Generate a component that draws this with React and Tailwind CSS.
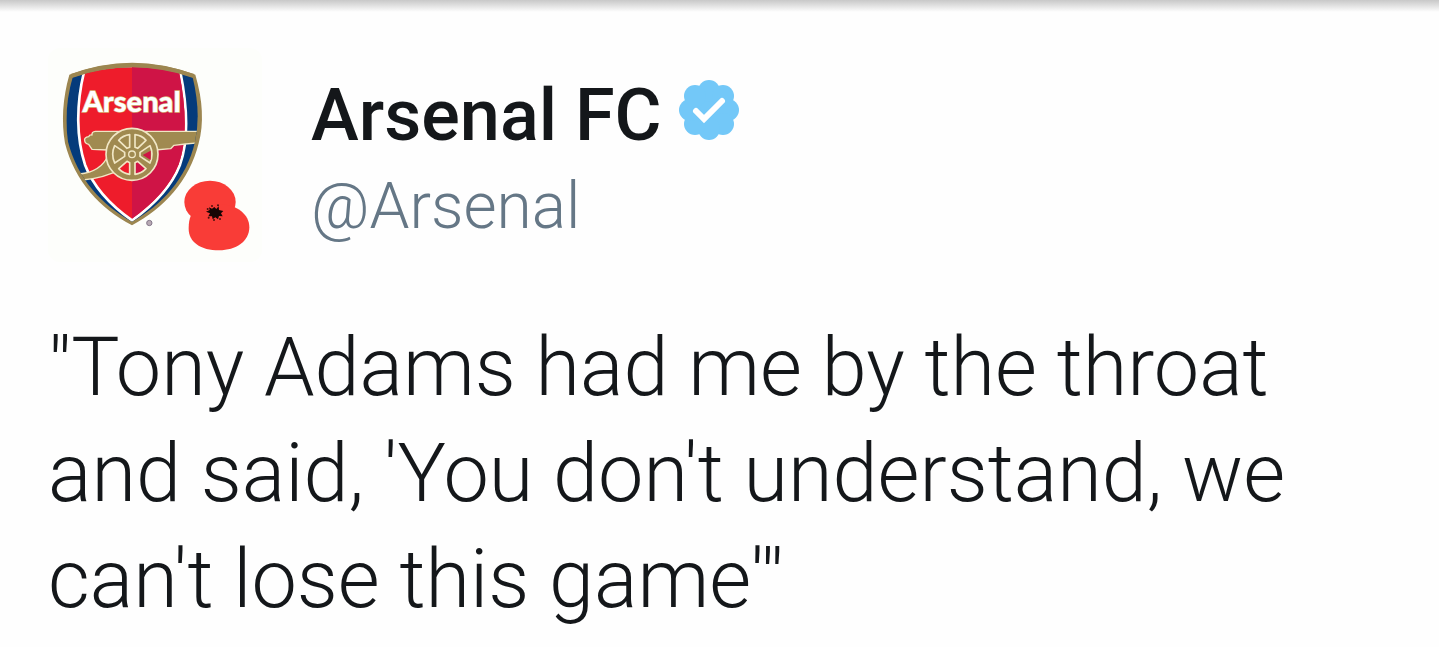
function Cannon() {
  return (
    <g stroke="#f0e6c4" strokeWidth="4" strokeLinejoin="round">
      <path
        d="M205 345 C190 380 160 398 118 402 L128 420 C175 416 220 400 250 385 Z"
        fill="#a08a50"
      />
      <path
        d="M480 274 L166 274 Q155 275 156 285 Q148 284 146 290 Q132 292 134 301 Q134 311 146 313 L156 328 L205 330 L345 330 L392 326 L402 316 L436 312 L480 308 Z"
        fill="#a08a50"
      />
    </g>
  );
}

function Wheel() {
  return (
    <g stroke="#f0e6c4" strokeWidth="5">
      <circle cx="276" cy="343" r="78" fill="#a08a50" />
      <g strokeWidth="5" strokeLinejoin="round">
        <path d="M269 284 L269 322 L261 325 L236 301 Q249 286 269 284 Z" fill="#a08a50" />
        <path d="M285 284 L285 322 L293 325 L318 301 Q305 286 285 284 Z" fill="#a08a50" />
        <path d="M269 403 L269 368 L261 364 L236 386 Q250 401 269 403 Z" fill="#ee1c2b" />
        <path d="M285 403 L285 368 L293 364 L318 386 Q304 401 285 403 Z" fill="#cf1446" />
        <path d="M224 317 L254 337 L254 349 L224 369 Q212 343 224 317 Z" fill="#a08a50" />
        <path d="M330 317 L300 337 L300 349 L330 369 Q342 343 330 317 Z" fill="#a08a50" />
        <path d="M332 332 L308 345 L332 360 Z" fill="#cf1446" stroke="none" />
      </g>
      <circle cx="276" cy="343" r="10" fill="#a08a50" strokeWidth="4" />
    </g>
  );
}

function Poppy() {
  return (
    <g>
      <ellipse cx="510" cy="486" rx="77" ry="64" fill="#f93c37" />
      <path
        d="M537 493 C592 493 628 524 628 562 C628 604 588 631 537 631 C482 631 446 606 446 566 C446 550 448 538 452 528 L500 500 Z"
        fill="#f93c37"
      />
      <path
        d="M498 515 L509 510 L507 502 L516 506 L523 501 L529 507 L536 499 L537 510 L550 513 L543 520 L548 529 L537 528 L534 538 L526 532 L518 538 L516 529 L505 529 L510 520 Z"
        fill="#160504"
      />
      <g fill="#4a0f0c">
        <circle cx="516" cy="498" r="3" />
        <circle cx="534" cy="496" r="3" />
        <circle cx="503" cy="507" r="3" />
        <circle cx="506" cy="533" r="3" />
        <circle cx="522" cy="540" r="3" />
        <circle cx="540" cy="537" r="3" />
      </g>
    </g>
  );
}

function Avatar() {
  return (
    <svg
      className="size-[214px] shrink-0 rounded-xl bg-[#fdfefb]"
      viewBox="24 24 642 642"
      role="img"
      aria-label="Arsenal crest with poppy"
    >
      <defs>
        <clipPath id="crest">
          <path d="M98 112 Q276 50 458 112 Q484 220 465 305 C440 415 365 495 276 545 C185 495 112 415 84 305 Q70 210 98 112 Z" />
        </clipPath>
      </defs>

      <path
        d="M88 104 Q276 32 466 104 Q500 220 476 310 C448 425 370 505 276 556 C180 505 104 425 75 310 Q58 210 88 104 Z"
        fill="#9c8650"
      />
      <g clipPath="url(#crest)">
        <rect x="60" y="40" width="430" height="520" fill="#053b7b" />
        {/* red field, white piping on both sides */}
        <path
          d="M132 96 Q276 60 421 96 C442 200 446 300 420 374 C392 446 334 500 276 541 C218 500 162 446 135 374 C109 295 108 195 132 96 Z"
          fill="#ee1c2b"
          stroke="#ffffff"
          strokeWidth="8"
        />
        <path
          d="M276 70 Q350 78 418 99 C438 200 442 300 416 373 C388 444 332 496 276 536 Z"
          fill="#cf1446"
        />
        <Cannon />
      </g>
      <path
        d="M94 108 Q276 44 461 108"
        fill="none"
        stroke="#9c8650"
        strokeWidth="12"
      />
      <Wheel />
      <text
        x="275"
        y="217"
        textAnchor="middle"
        className="fill-white stroke-[#d9b87c] font-['Lato',sans-serif] text-[87px] font-black"
        strokeWidth="4"
        paintOrder="stroke"
      >
        Arsenal
      </text>
      <circle cx="328" cy="549" r="8" fill="#b9abb5" stroke="#85798b" strokeWidth="3" />
      <Poppy />
    </svg>
  );
}

function VerifiedBadge() {
  return (
    <svg className="size-[62px] shrink-0" viewBox="0 0 62 62" role="img" aria-label="Verified account">
      <g fill="#73c8f8">
        <circle cx="31" cy="31" r="23" />
        <circle cx="31" cy="12" r="11" />
        <circle cx="45" cy="17" r="11" />
        <circle cx="50" cy="31" r="11" />
        <circle cx="45" cy="45" r="11" />
        <circle cx="31" cy="50" r="11" />
        <circle cx="17" cy="45" r="11" />
        <circle cx="12" cy="31" r="11" />
        <circle cx="17" cy="17" r="11" />
      </g>
      <path
        d="M18 32 L26 40 L44 22"
        fill="none"
        stroke="#ffffff"
        strokeWidth="6"
        strokeLinecap="round"
      />
    </svg>
  );
}

export default function App() {
  return (
    <div className="min-h-screen bg-[#fefefe] font-['Roboto',sans-serif] text-[#14171a]">
      <div className="h-3 bg-linear-to-b from-[#c8c8c8] to-[#fefefe]" />
      <article className="px-12 pt-9 pb-6">
        <header className="flex gap-[49px]">
          <Avatar />
          <div className="pt-5">
            <div className="flex items-start gap-4">
              <h1 className="text-[72px] leading-[96px] font-medium">Arsenal FC</h1>
              <div className="pt-[11px]">
                <VerifiedBadge />
              </div>
            </div>
            <a href="#0" className="block text-[64px] leading-[86px] font-light text-[#657786]">
              @Arsenal
            </a>
          </div>
        </header>
        <p className="mt-[53px] max-w-[1300px] text-[81px] leading-[106px] font-light">
          "Tony Adams had me by the throat and said, 'You don't understand, we can't lose this game'"
        </p>
      </article>
    </div>
  );
}
